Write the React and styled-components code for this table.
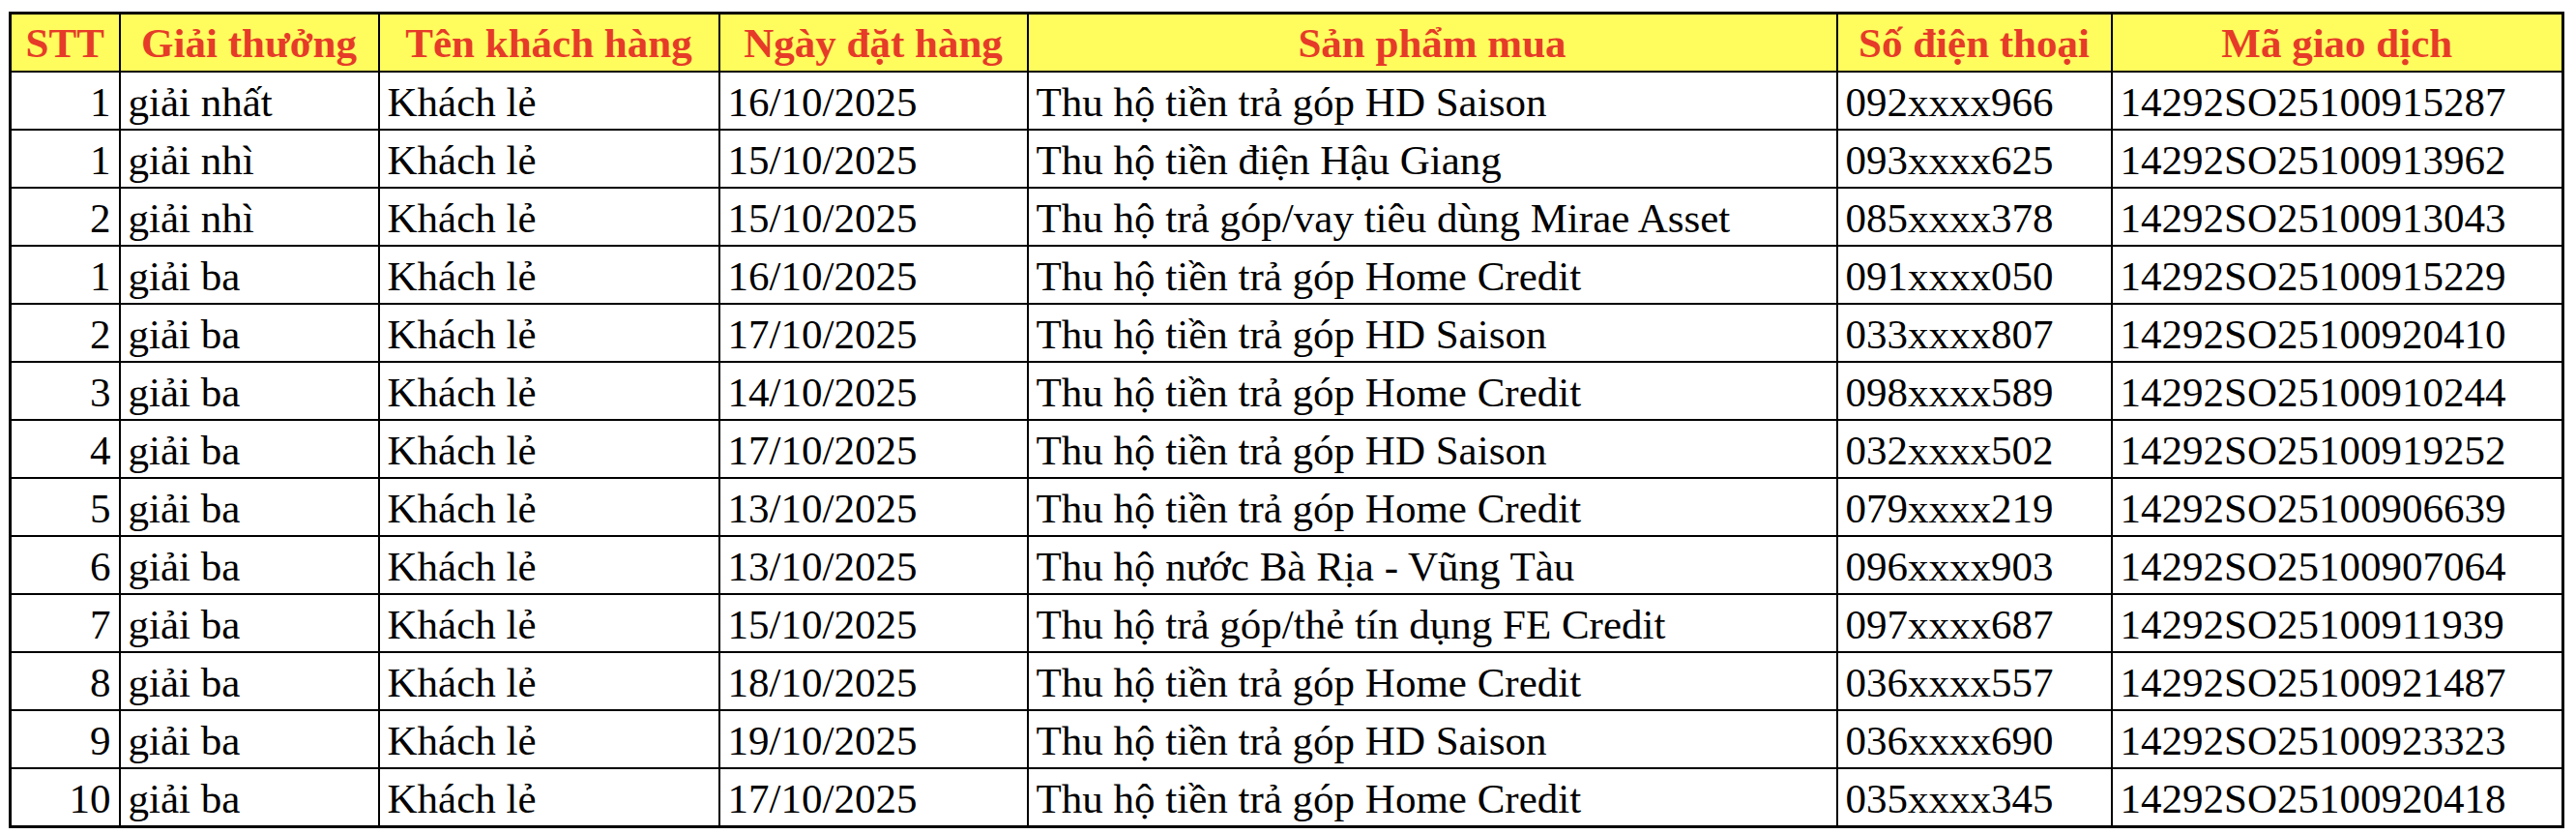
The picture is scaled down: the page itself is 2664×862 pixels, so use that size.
import React from 'react';
import styled, { createGlobalStyle } from 'styled-components';

const GlobalStyle = createGlobalStyle`
  html, body {
    margin: 0;
    padding: 0;
    background: #ffffff;
  }
`;

const columns = [
  { title: 'STT', width: 113, align: 'right' },
  { title: 'Giải thưởng', width: 268 },
  { title: 'Tên khách hàng', width: 352 },
  { title: 'Ngày đặt hàng', width: 319 },
  { title: 'Sản phẩm mua', width: 837 },
  { title: 'Số điện thoại', width: 284 },
  { title: 'Mã giao dịch', width: 467 },
];

const rows = [
  ['1', 'giải nhất', 'Khách lẻ', '16/10/2025', 'Thu hộ tiền trả góp HD Saison', '092xxxx966', '14292SO25100915287'],
  ['1', 'giải nhì', 'Khách lẻ', '15/10/2025', 'Thu hộ tiền điện Hậu Giang', '093xxxx625', '14292SO25100913962'],
  ['2', 'giải nhì', 'Khách lẻ', '15/10/2025', 'Thu hộ trả góp/vay tiêu dùng Mirae Asset', '085xxxx378', '14292SO25100913043'],
  ['1', 'giải ba', 'Khách lẻ', '16/10/2025', 'Thu hộ tiền trả góp Home Credit', '091xxxx050', '14292SO25100915229'],
  ['2', 'giải ba', 'Khách lẻ', '17/10/2025', 'Thu hộ tiền trả góp HD Saison', '033xxxx807', '14292SO25100920410'],
  ['3', 'giải ba', 'Khách lẻ', '14/10/2025', 'Thu hộ tiền trả góp Home Credit', '098xxxx589', '14292SO25100910244'],
  ['4', 'giải ba', 'Khách lẻ', '17/10/2025', 'Thu hộ tiền trả góp HD Saison', '032xxxx502', '14292SO25100919252'],
  ['5', 'giải ba', 'Khách lẻ', '13/10/2025', 'Thu hộ tiền trả góp Home Credit', '079xxxx219', '14292SO25100906639'],
  ['6', 'giải ba', 'Khách lẻ', '13/10/2025', 'Thu hộ nước Bà Rịa - Vũng Tàu', '096xxxx903', '14292SO25100907064'],
  ['7', 'giải ba', 'Khách lẻ', '15/10/2025', 'Thu hộ trả góp/thẻ tín dụng FE Credit', '097xxxx687', '14292SO25100911939'],
  ['8', 'giải ba', 'Khách lẻ', '18/10/2025', 'Thu hộ tiền trả góp Home Credit', '036xxxx557', '14292SO25100921487'],
  ['9', 'giải ba', 'Khách lẻ', '19/10/2025', 'Thu hộ tiền trả góp HD Saison', '036xxxx690', '14292SO25100923323'],
  ['10', 'giải ba', 'Khách lẻ', '17/10/2025', 'Thu hộ tiền trả góp Home Credit', '035xxxx345', '14292SO25100920418'],
];

const Page = styled.div`
  padding: 12px 0 0 9px;
  font-family: "Liberation Serif", "Times New Roman", serif;
`;

const Table = styled.table`
  border-collapse: collapse;
  table-layout: fixed;
  width: 2640px;
  border: 3px solid #000;
`;

const HeadCell = styled.th`
  height: 58px;
  padding: 0;
  background: #fffc5e;
  color: #e63b28;
  font-size: 43px;
  font-weight: bold;
  text-align: center;
  border: 2px solid #000;
  white-space: nowrap;
  line-height: 1;
`;

const Cell = styled.td`
  height: 56px;
  padding: ${(p) => (p.$align === 'right' ? '2px 8px 0 0' : '2px 0 0 8px')};
  text-align: ${(p) => p.$align || 'left'};
  color: #000;
  font-size: 43px;
  border: 2px solid #000;
  white-space: nowrap;
  line-height: 1;
`;

export default function App() {
  return (
    <Page>
      <GlobalStyle />
      <Table>
        <colgroup>
          {columns.map((c) => (
            <col key={c.title} style={{ width: c.width }} />
          ))}
        </colgroup>
        <thead>
          <tr>
            {columns.map((c) => (
              <HeadCell key={c.title}>{c.title}</HeadCell>
            ))}
          </tr>
        </thead>
        <tbody>
          {rows.map((r, i) => (
            <tr key={i}>
              {r.map((v, j) => (
                <Cell key={j} $align={columns[j].align}>
                  {v}
                </Cell>
              ))}
            </tr>
          ))}
        </tbody>
      </Table>
    </Page>
  );
}
